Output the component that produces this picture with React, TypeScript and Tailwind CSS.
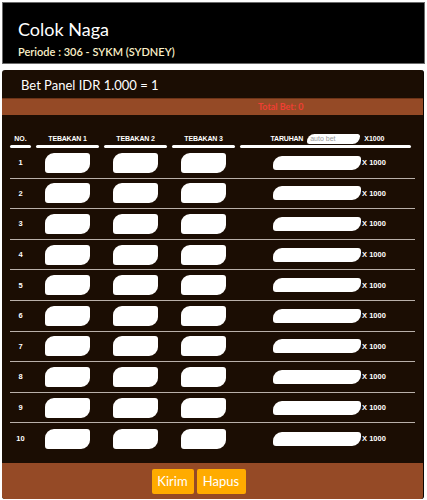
const rows = [1, 2, 3, 4, 5, 6, 7, 8, 9, 10]

const cols = ["TEBAKAN 1", "TEBAKAN 2", "TEBAKAN 3"]

const shape = "rounded-tl-[9px] rounded-br-[9px] rounded-tr-[3px] rounded-bl-[3px]"

const GuessBox = () => (
    <div className={`w-[45px] h-[20px] bg-white ${shape}`} />
)

const App = () => {
    return (
        <div className="w-[427px] h-[500px] bg-white p-[2px] font-['Lato',sans-serif] overflow-hidden">
            {/* HEADER */}
            <div className="bg-black border border-[#6b6b6b] h-[62px] px-[15px] pt-[15px] text-white">
                <h1 className="text-[18px] leading-[22px]">Colok Naga</h1>
                <p className="text-[11px] leading-[15px] mt-[4px] font-semibold text-[#fbf0c8]">Periode : 306 - SYKM (SYDNEY)</p>
            </div>

            {/* BET PANEL */}
            <div className="mt-[6px] w-[422px] bg-[#1b0d03] rounded-[3px] border-r border-[#0d0602] overflow-hidden">
                <div className="h-[28px] pl-[19px] pt-[7px] text-[13px] leading-[16px] text-white">Bet Panel IDR 1.000 = 1</div>
                <div className="h-[17px] bg-[#954a26] border-t border-[#6e3418] pl-[256px] text-[9px] leading-[15px] font-bold text-[#ee3f33]">Total Bet: 0</div>

                <div className="pt-[19px] pl-[8px] pr-[8px] pb-[9px] font-['Liberation_Sans',sans-serif]">
                    {/* table head */}
                    <div className="grid grid-cols-[21px_63px_63px_63px_1fr] gap-x-[5px]">
                        <div className="flex flex-col items-center">
                            <span className="text-[7px] leading-[10px] font-bold text-white">NO.</span>
                            <div className="w-full h-[3px] mt-[1px] bg-white rounded-full" />
                        </div>
                        {cols.map((c) => (
                            <div key={c} className="flex flex-col items-center">
                                <span className="text-[7px] leading-[10px] font-bold text-white tracking-[-0.2px]">{c}</span>
                                <div className="w-full h-[3px] mt-[1px] bg-white rounded-full" />
                            </div>
                        ))}
                        <div className="flex flex-col items-center pr-[4px]">
                            <div className="flex items-center h-[10px] gap-[4px] pl-[4px]">
                                <span className="text-[7px] leading-[10px] font-bold text-white tracking-[-0.2px]">TARUHAN</span>
                                <div className={`w-[53px] h-[10px] bg-white ${shape} rounded-tl-[5px] rounded-br-[5px] text-[7px] leading-[10px] text-[#9a9a9a] pl-[3px]`}>auto bet</div>
                                <span className="text-[7px] leading-[10px] font-bold text-white">X1000</span>
                            </div>
                            <div className="w-full h-[3px] mt-[1px] bg-white rounded-full" />
                        </div>
                    </div>

                    {/* rows */}
                    {rows.map((n, i) => (
                        <div
                            key={n}
                            className={`grid grid-cols-[21px_63px_63px_63px_1fr] gap-x-[5px] items-center h-[30.6px] ${i < rows.length - 1 ? "border-b border-[#b9b0aa]" : ""}`}>
                            <span className="text-center text-[7.5px] font-bold text-white">{n}</span>
                            <div className="flex justify-center"><GuessBox /></div>
                            <div className="flex justify-center"><GuessBox /></div>
                            <div className="flex justify-center"><GuessBox /></div>
                            <div className="flex items-center justify-center gap-[1px] pl-[4px]">
                                <div className={`w-[88px] h-[14px] bg-white ${shape}`} />
                                <span className="text-[7.5px] font-bold text-white">X 1000</span>
                            </div>
                        </div>
                    ))}
                </div>

                {/* FOOTER */}
                <div className="bg-[#954a26] h-[36px] flex justify-center items-start pt-[6px] pr-[28px] gap-[3px]">
                    <button className="h-[25px] w-[42px] bg-[#ffab00] rounded-[2px] text-white text-[13px]">Kirim</button>
                    <button className="h-[25px] w-[49px] bg-[#ffab00] rounded-[2px] text-white text-[13px]">Hapus</button>
                </div>
            </div>
        </div>
    )
}

export default App
